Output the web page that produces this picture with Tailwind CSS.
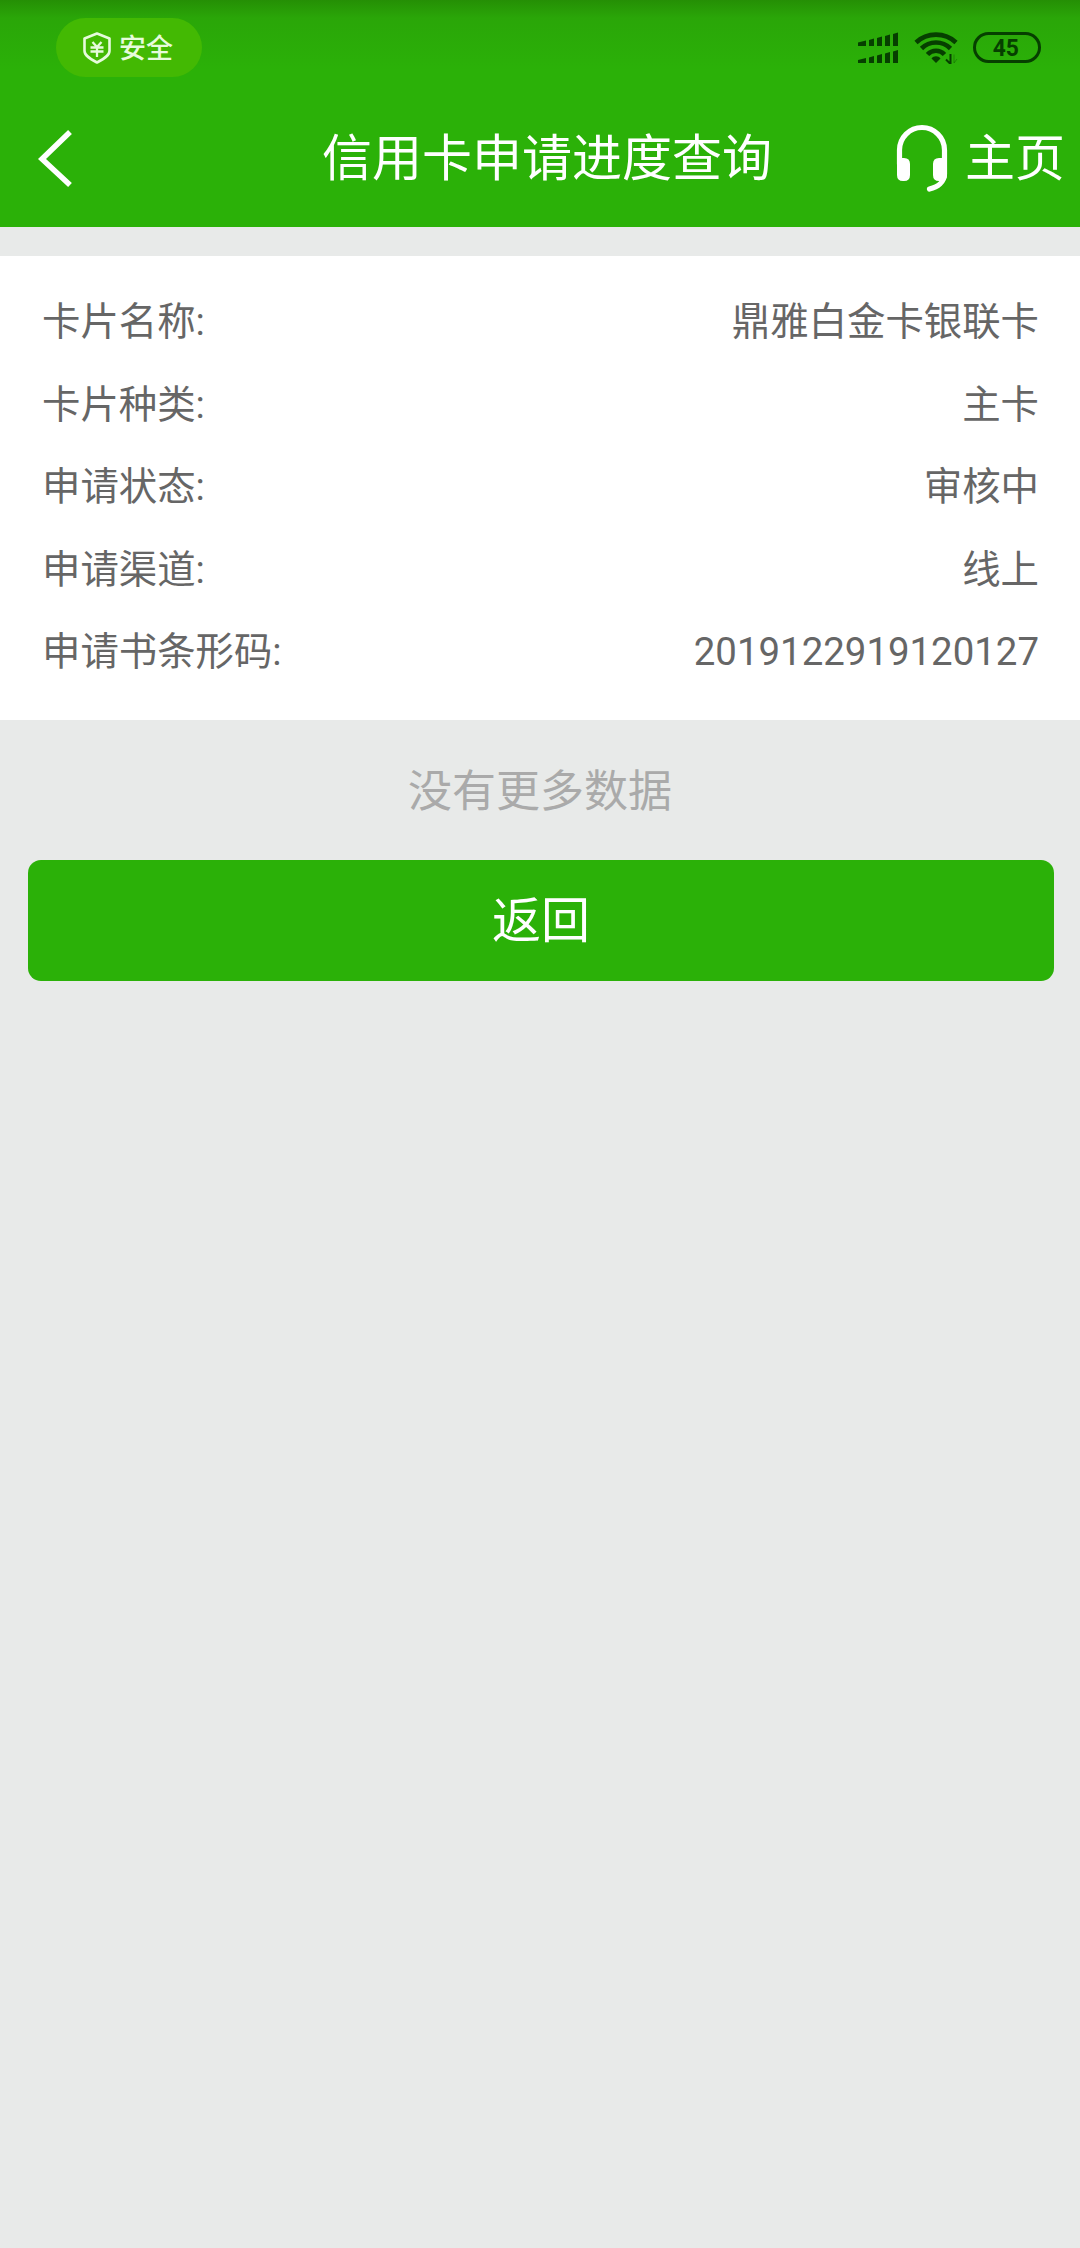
<!DOCTYPE html>
<html lang="zh-CN">
<head>
<meta charset="utf-8">
<meta name="viewport" content="width=device-width, initial-scale=1">
<title>信用卡申请进度查询</title>
<script src="https://cdn.jsdelivr.net/npm/@tailwindcss/browser@4"></script>
</head>
<body class="min-h-[2248px] w-[1080px] bg-[#e8eae9] font-[Roboto,'Noto_Sans_CJK_SC',sans-serif]">
<header class="h-[227px] bg-[#2bb108] bg-linear-to-b from-[#258f05] from-0% via-[#2aa608] via-[18px] to-[#2bb108] to-[70px] text-white">
  <!-- Status bar -->
  <div class="flex h-[95px] items-center justify-between pl-14 pr-[39px]">
    <div class="flex h-[59px] w-[146px] items-center rounded-full bg-[#43b903] pl-[26px] text-[#e6fbdc]">
      <svg class="h-8 w-[30px] shrink-0" viewBox="0 0 30 32" fill="none" stroke="currentColor">
        <path d="M15 1.500 27.500 6.500V19c0 5-7 8.500-12.500 11.500C9.500 27.500 2.500 24 2.500 19V6.500Z" stroke-width="2.600" stroke-linejoin="round"/>
        <path d="m10.500 10 4.500 5 4.500-5M8.500 15.500h13M8.500 19.500h13M15 15v10" stroke-width="2.300"/>
      </svg>
      <span class="ml-[7px] pt-0.5 text-[27px] leading-[34px] font-medium">安全</span>
    </div>
    <div class="flex items-center text-[#063f00]">
      <svg class="h-8 w-[42px]" viewBox="0 0 42 32" fill="currentColor">
        <path d="M0 10.500 8 8.500V14H0ZM11 8l5-1.500V14h-5ZM19 6l5-1.500V14h-5ZM27 4l5-1.500V14h-5ZM35 2l5-1.500V14h-5ZM0 28 8 26v5H0ZM11 25.500l5-1.500v7h-5ZM19 23.500l5-1.500v9h-5ZM27 21.500l5-1.500v11h-5ZM35 19.500l5-1.500v13h-5Z"/>
      </svg>
      <svg class="ml-[14px] h-8 w-[44px]" viewBox="0 0 44 32" fill="none" stroke="currentColor" stroke-width="4.600">
        <path d="M2 10.500c11-10.500 29-10.500 40 0M7.500 16.500c8-8 21-8 29 0M13.500 22.500c4.500-5 12.500-5 17 0"/>
        <path d="M17.500 26.500c2-3 7-3 9 0L22 31Z" fill="currentColor" stroke="none"/>
        <path d="M36.500 22v10L32 27.500" stroke-width="2"/>
        <path d="M40 22.500V31l3-4" stroke-width="1" opacity=".35"/>
      </svg>
      <div class="ml-[15px] flex h-[31px] w-[68px] items-center justify-center rounded-full border-3 border-current text-[24px] leading-none font-bold"><span class="-translate-x-px scale-x-95">45</span></div>
    </div>
  </div>
  <!-- Navigation bar -->
  <div class="flex h-[128px] items-center">
    <button class="ml-[38px] h-[60px] w-[36px]" aria-label="返回">
      <svg class="h-[60px] w-[36px]" viewBox="0 0 36 60" fill="none" stroke="currentColor" stroke-width="5.500"><path d="M32 3 4 30l28 26"/></svg>
    </button>
    <h1 class="ml-[248px] text-[50px] leading-[60px]">信用卡申请进度查询</h1>
    <svg class="ml-[123px] mt-[-2px] h-[68px] w-[54px]" viewBox="0 0 54 68" fill="none" stroke="currentColor" stroke-width="5.200" stroke-linecap="round">
      <path d="M4.500 40V26a22.500 22.500 0 0 1 45 0v24c0 8-7 13-15 15"/>
      <path d="M2 34h7q6 0 6 6v11q0 6-6 6H8q-6 0-6-6ZM52 34h-8q-6 0-6 6v11q0 6 6 6h2q6 0 6-6Z" fill="currentColor" stroke="none"/>
    </svg>
    <span class="ml-[16px] text-[50px] leading-[60px] whitespace-nowrap">主页</span>
  </div>
</header>
<main class="pt-[29px]">
  <dl class="h-[464px] bg-white pt-[24.5px] pr-[41px] pl-[42px] text-[38.4px] text-[#666]">
    <div class="flex h-[82.6px] items-center justify-between"><dt>卡片名称:</dt><dd>鼎雅白金卡银联卡</dd></div>
    <div class="flex h-[82.6px] items-center justify-between"><dt>卡片种类:</dt><dd>主卡</dd></div>
    <div class="flex h-[82.6px] items-center justify-between"><dt>申请状态:</dt><dd>审核中</dd></div>
    <div class="flex h-[82.6px] items-center justify-between"><dt>申请渠道:</dt><dd>线上</dd></div>
    <div class="flex h-[82.6px] items-center justify-between"><dt>申请书条形码:</dt><dd>2019122919120127</dd></div>
  </dl>
  <p class="flex h-[140px] items-center justify-center pt-[3px] text-[44px] text-[#aaa]">没有更多数据</p>
  <button class="ml-7 flex h-[121px] w-[1026px] items-center justify-center rounded-[13px] bg-[#2bb108] pt-0.5 text-[49px] text-white">返回</button>
</main>
</body>
</html>
